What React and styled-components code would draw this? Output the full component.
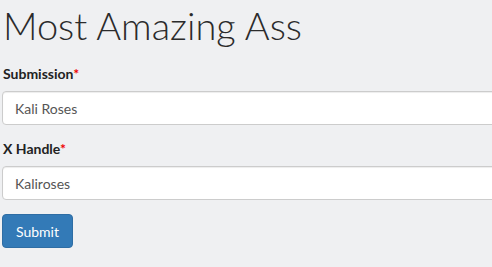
import React from "react";
import styled, { createGlobalStyle } from "styled-components";

const Global = createGlobalStyle`
  html, body { margin: 0; padding: 0; background: #eff0f2; overflow: hidden; }
  body { font-family: Lato, "Noto Sans", sans-serif; color: #333; }
`;

const Page = styled.div`
  padding: 0 0 0 2px;
  width: 520px;
`;

const Title = styled.h1`
  margin: 0;
  padding: 2px 0 0 1px;
  font-size: 38px;
  font-weight: 300;
  line-height: 46px;
  color: #2b2b2b;
`;

const Form = styled.form`
  display: flex;
  flex-direction: column;
  margin-top: 16px;
`;

const Group = styled.div`
  display: flex;
  flex-direction: column;
  margin-bottom: 14px;
`;

const Label = styled.label`
  font-size: 14px;
  font-weight: 700;
  line-height: 20px;
  margin: 0 0 7px 1px;
  color: #222;
`;

const Req = styled.span`
  color: #e00;
`;

const Input = styled.input`
  box-sizing: border-box;
  height: 34px;
  width: 100%;
  padding: 6px 12px;
  font-family: inherit;
  font-size: 14px;
  color: #555;
  background: #fff;
  border: 1px solid #ccc;
  border-radius: 4px;
  box-shadow: inset 0 1px 1px rgba(0,0,0,0.075);
  outline: none;
`;

const Button = styled.button`
  align-self: flex-start;
  height: 34px;
  width: 71px;
  padding: 6px 12px;
  font-family: inherit;
  font-size: 14px;
  color: #fff;
  background: #337ab7;
  border: 1px solid #2e6da4;
  border-radius: 4px;
`;

export default function App() {
  return (
    <>
      <Global />
      <Page>
        <Title>Most Amazing Ass</Title>
        <Form onSubmit={(e) => e.preventDefault()}>
          <Group>
            <Label>Submission<Req>*</Req></Label>
            <Input defaultValue="Kali Roses" />
          </Group>
          <Group>
            <Label>X Handle<Req>*</Req></Label>
            <Input defaultValue="Kaliroses" />
          </Group>
          <Button type="submit">Submit</Button>
        </Form>
      </Page>
    </>
  );
}
